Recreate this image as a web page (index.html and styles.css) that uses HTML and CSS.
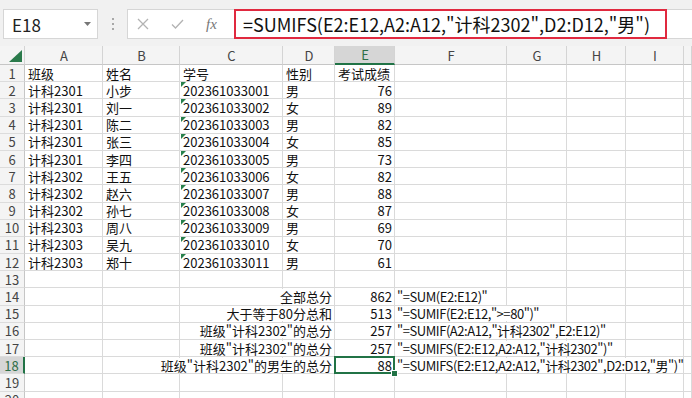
FILE: index.html
```html
<!DOCTYPE html>
<html lang="zh-CN">
<head>
    <meta charset="UTF-8">
    <meta name="viewport" content="width=device-width, initial-scale=1.0">
    <title>SUMIFS 示例</title>
    <link rel="stylesheet" href="styles.css">
</head>
<body>
    <div class="toolbar">
        <div class="namebox">
            <span>E18</span>
            <svg width="7" height="4" viewBox="0 0 7 4"><path d="M0 0H7L3.5 4Z" fill="#777"/></svg>
        </div>
        <div class="grip"><i></i><i></i><i></i></div>
        <div class="fbar">
            <div class="ficons">
                <svg width="12" height="12" viewBox="0 0 12 12"><path d="M1 1L11 11M11 1L1 11" stroke="#b3b3b3" stroke-width="1.3" fill="none"/></svg>
                <svg width="13" height="10" viewBox="0 0 13 10"><path d="M1 5.5L4.5 9L12 1" stroke="#b3b3b3" stroke-width="1.3" fill="none"/></svg>
                <span class="fx">fx</span>
            </div>
            <div class="formula">=SUMIFS(E2:E12,A2:A12,"计科2302",D2:D12,"男")</div>
        </div>
    </div>

    <div class="sheet">
        <div class="row head">
            <div class="corner"><svg width="13" height="12" viewBox="0 0 13 12"><path d="M13 0V12H0Z" fill="#2a7a4b"/></svg></div>
            <div>A</div><div>B</div><div>C</div><div>D</div><div class="on">E</div><div>F</div><div>G</div><div>H</div><div>I</div><div></div>
        </div>

        <div class="row">
            <div class="rh">1</div><div>班级</div><div>姓名</div><div>学号</div><div>性别</div><div>考试成绩</div><div></div><div></div><div></div><div></div><div></div>
        </div>
        <div class="row">
            <div class="rh">2</div><div>计科2301</div><div>小步</div><div class="txt">202361033001</div><div>男</div><div class="r">76</div><div></div><div></div><div></div><div></div><div></div>
        </div>
        <div class="row">
            <div class="rh">3</div><div>计科2301</div><div>刘一</div><div class="txt">202361033002</div><div>女</div><div class="r">89</div><div></div><div></div><div></div><div></div><div></div>
        </div>
        <div class="row">
            <div class="rh">4</div><div>计科2301</div><div>陈二</div><div class="txt">202361033003</div><div>男</div><div class="r">82</div><div></div><div></div><div></div><div></div><div></div>
        </div>
        <div class="row">
            <div class="rh">5</div><div>计科2301</div><div>张三</div><div class="txt">202361033004</div><div>女</div><div class="r">85</div><div></div><div></div><div></div><div></div><div></div>
        </div>
        <div class="row">
            <div class="rh">6</div><div>计科2301</div><div>李四</div><div class="txt">202361033005</div><div>男</div><div class="r">73</div><div></div><div></div><div></div><div></div><div></div>
        </div>
        <div class="row">
            <div class="rh">7</div><div>计科2302</div><div>王五</div><div class="txt">202361033006</div><div>女</div><div class="r">82</div><div></div><div></div><div></div><div></div><div></div>
        </div>
        <div class="row">
            <div class="rh">8</div><div>计科2302</div><div>赵六</div><div class="txt">202361033007</div><div>男</div><div class="r">88</div><div></div><div></div><div></div><div></div><div></div>
        </div>
        <div class="row">
            <div class="rh">9</div><div>计科2302</div><div>孙七</div><div class="txt">202361033008</div><div>女</div><div class="r">87</div><div></div><div></div><div></div><div></div><div></div>
        </div>
        <div class="row">
            <div class="rh">10</div><div>计科2303</div><div>周八</div><div class="txt">202361033009</div><div>男</div><div class="r">69</div><div></div><div></div><div></div><div></div><div></div>
        </div>
        <div class="row">
            <div class="rh">11</div><div>计科2303</div><div>吴九</div><div class="txt">202361033010</div><div>女</div><div class="r">70</div><div></div><div></div><div></div><div></div><div></div>
        </div>
        <div class="row">
            <div class="rh">12</div><div>计科2303</div><div>郑十</div><div class="txt">202361033011</div><div>男</div><div class="r">61</div><div></div><div></div><div></div><div></div><div></div>
        </div>
        <div class="row">
            <div class="rh">13</div><div></div><div></div><div></div><div></div><div></div><div></div><div></div><div></div><div></div><div></div>
        </div>
        <div class="row">
            <div class="rh">14</div><div></div><div></div><div></div><div class="r"><span>全部总分</span></div><div class="r">862</div><div class="f"><span>"=SUM(E2:E12)"</span></div><div></div><div></div><div></div><div></div>
        </div>
        <div class="row">
            <div class="rh">15</div><div></div><div></div><div></div><div class="r"><span>大于等于80分总和</span></div><div class="r">513</div><div class="f"><span>"=SUMIF(E2:E12,"&gt;=80")"</span></div><div></div><div></div><div></div><div></div>
        </div>
        <div class="row">
            <div class="rh">16</div><div></div><div></div><div></div><div class="r"><span>班级"计科2302"的总分</span></div><div class="r">257</div><div class="f"><span>"=SUMIF(A2:A12,"计科2302",E2:E12)"</span></div><div></div><div></div><div></div><div></div>
        </div>
        <div class="row">
            <div class="rh">17</div><div></div><div></div><div></div><div class="r"><span>班级"计科2302"的总分</span></div><div class="r">257</div><div class="f"><span>"=SUMIFS(E2:E12,A2:A12,"计科2302")"</span></div><div></div><div></div><div></div><div></div>
        </div>
        <div class="row">
            <div class="rh on">18</div><div></div><div></div><div></div><div class="r"><span>班级"计科2302"的男生的总分</span></div><div class="r sel">88</div><div class="f"><span>"=SUMIFS(E2:E12,A2:A12,"计科2302",D2:D12,"男")"</span></div><div></div><div></div><div></div><div></div>
        </div>
        <div class="row">
            <div class="rh">19</div><div></div><div></div><div></div><div></div><div></div><div></div><div></div><div></div><div></div><div></div>
        </div>
        <div class="row">
            <div class="rh">20</div><div></div><div></div><div></div><div></div><div></div><div></div><div></div><div></div><div></div><div></div>
        </div>
    </div>
</body>
</html>
```

FILE: styles.css
```css
body {
    margin: 0;
    width: 692px;
    height: 398px;
    overflow: hidden;
    background: #fff;
    color: #111;
    font-family: "Noto Sans CJK SC", sans-serif;
    font-size: 13px;
}

/* formula bar */
.toolbar {
    height: 46px;
    box-sizing: border-box;
    padding-top: 9px;
    background: #f1f1f1;
    display: flex;
    align-items: flex-start;
}
.namebox {
    margin-left: 3px;
    width: 95px;
    height: 30px;
    box-sizing: border-box;
    padding: 0 6px 0 8px;
    background: #fff;
    border: 1px solid #d6d6d6;
    display: flex;
    align-items: center;
    justify-content: space-between;
    font-size: 17px;
    color: #222;
}
.grip {
    width: 29px;
    height: 30px;
    display: flex;
    flex-direction: column;
    align-items: center;
    justify-content: center;
    gap: 3px;
}
.grip i {
    width: 2px;
    height: 2px;
    background: #a8a8a8;
}
.fbar {
    flex: 1;
    height: 30px;
    box-sizing: border-box;
    background: #fff;
    border: 1px solid #d6d6d6;
    border-right: none;
    display: flex;
    align-items: stretch;
}
.ficons {
    width: 106px;
    box-sizing: border-box;
    padding-left: 9px;
    display: flex;
    align-items: center;
    gap: 22px;
}
.fx {
    font-family: "Liberation Serif", serif;
    font-style: italic;
    font-size: 15px;
    color: #777;
}
.formula {
    width: 433px;
    margin-top: -1px;
    height: 30px;
    box-sizing: border-box;
    border: 2px solid #e0293f;
    padding-left: 7px;
    display: flex;
    align-items: center;
    font-size: 18px;
    color: #111;
    white-space: nowrap;
}

/* sheet grid */
.row {
    display: grid;
    grid-template-columns: 25px 78px 77px 103px 52px 60px 112px 60px 59px 58px 8px;
    height: 17.2px;
}
.row > div {
    position: relative;
    box-sizing: border-box;
    border-right: 1px solid #dadada;
    border-bottom: 1px solid #dadada;
    padding: 0 2px 0 3px;
    display: flex;
    align-items: center;
    white-space: nowrap;
    line-height: 15px;
}
.row > .r {
    justify-content: flex-end;
    padding-right: 2px;
}
.row > .f {
    padding-left: 2px;
    letter-spacing: -0.45px;
}
.row span {
    position: relative;
    z-index: 1;
    background: #fff;
}

.head {
    height: 19px;
    background: #f4f4f4;
}
.head > div {
    justify-content: center;
    color: #444;
    border-right-color: #d4d4d4;
    border-bottom-color: #c6c6c6;
}
.head > .on {
    background: #d6d6d6;
    color: #2e6e47;
    border-bottom: 2px solid #217346;
}
.head > .corner {
    align-items: flex-end;
    justify-content: flex-end;
    padding: 0 2px 2px 0;
}

.row > .rh {
    justify-content: center;
    padding: 0;
    background: #f4f4f4;
    color: #444;
    border-right-color: #c6c6c6;
    border-bottom-color: #dcdcdc;
}
.row > .rh.on {
    background: #d6d6d6;
    color: #2e6e47;
    border-right: 2px solid #217346;
}

/* green "number stored as text" marks */
.txt::before {
    content: "";
    position: absolute;
    top: 0;
    left: 1px;
    border-top: 5px solid #27804b;
    border-right: 5px solid transparent;
}

/* active cell */
.sel::after {
    content: "";
    position: absolute;
    z-index: 2;
    top: -1px;
    left: -1px;
    right: -1px;
    bottom: -1px;
    border: 2px solid #217346;
}
.sel::before {
    content: "";
    position: absolute;
    z-index: 3;
    right: -4px;
    bottom: -4px;
    width: 5px;
    height: 5px;
    background: #217346;
    border: 1px solid #fff;
}
```
